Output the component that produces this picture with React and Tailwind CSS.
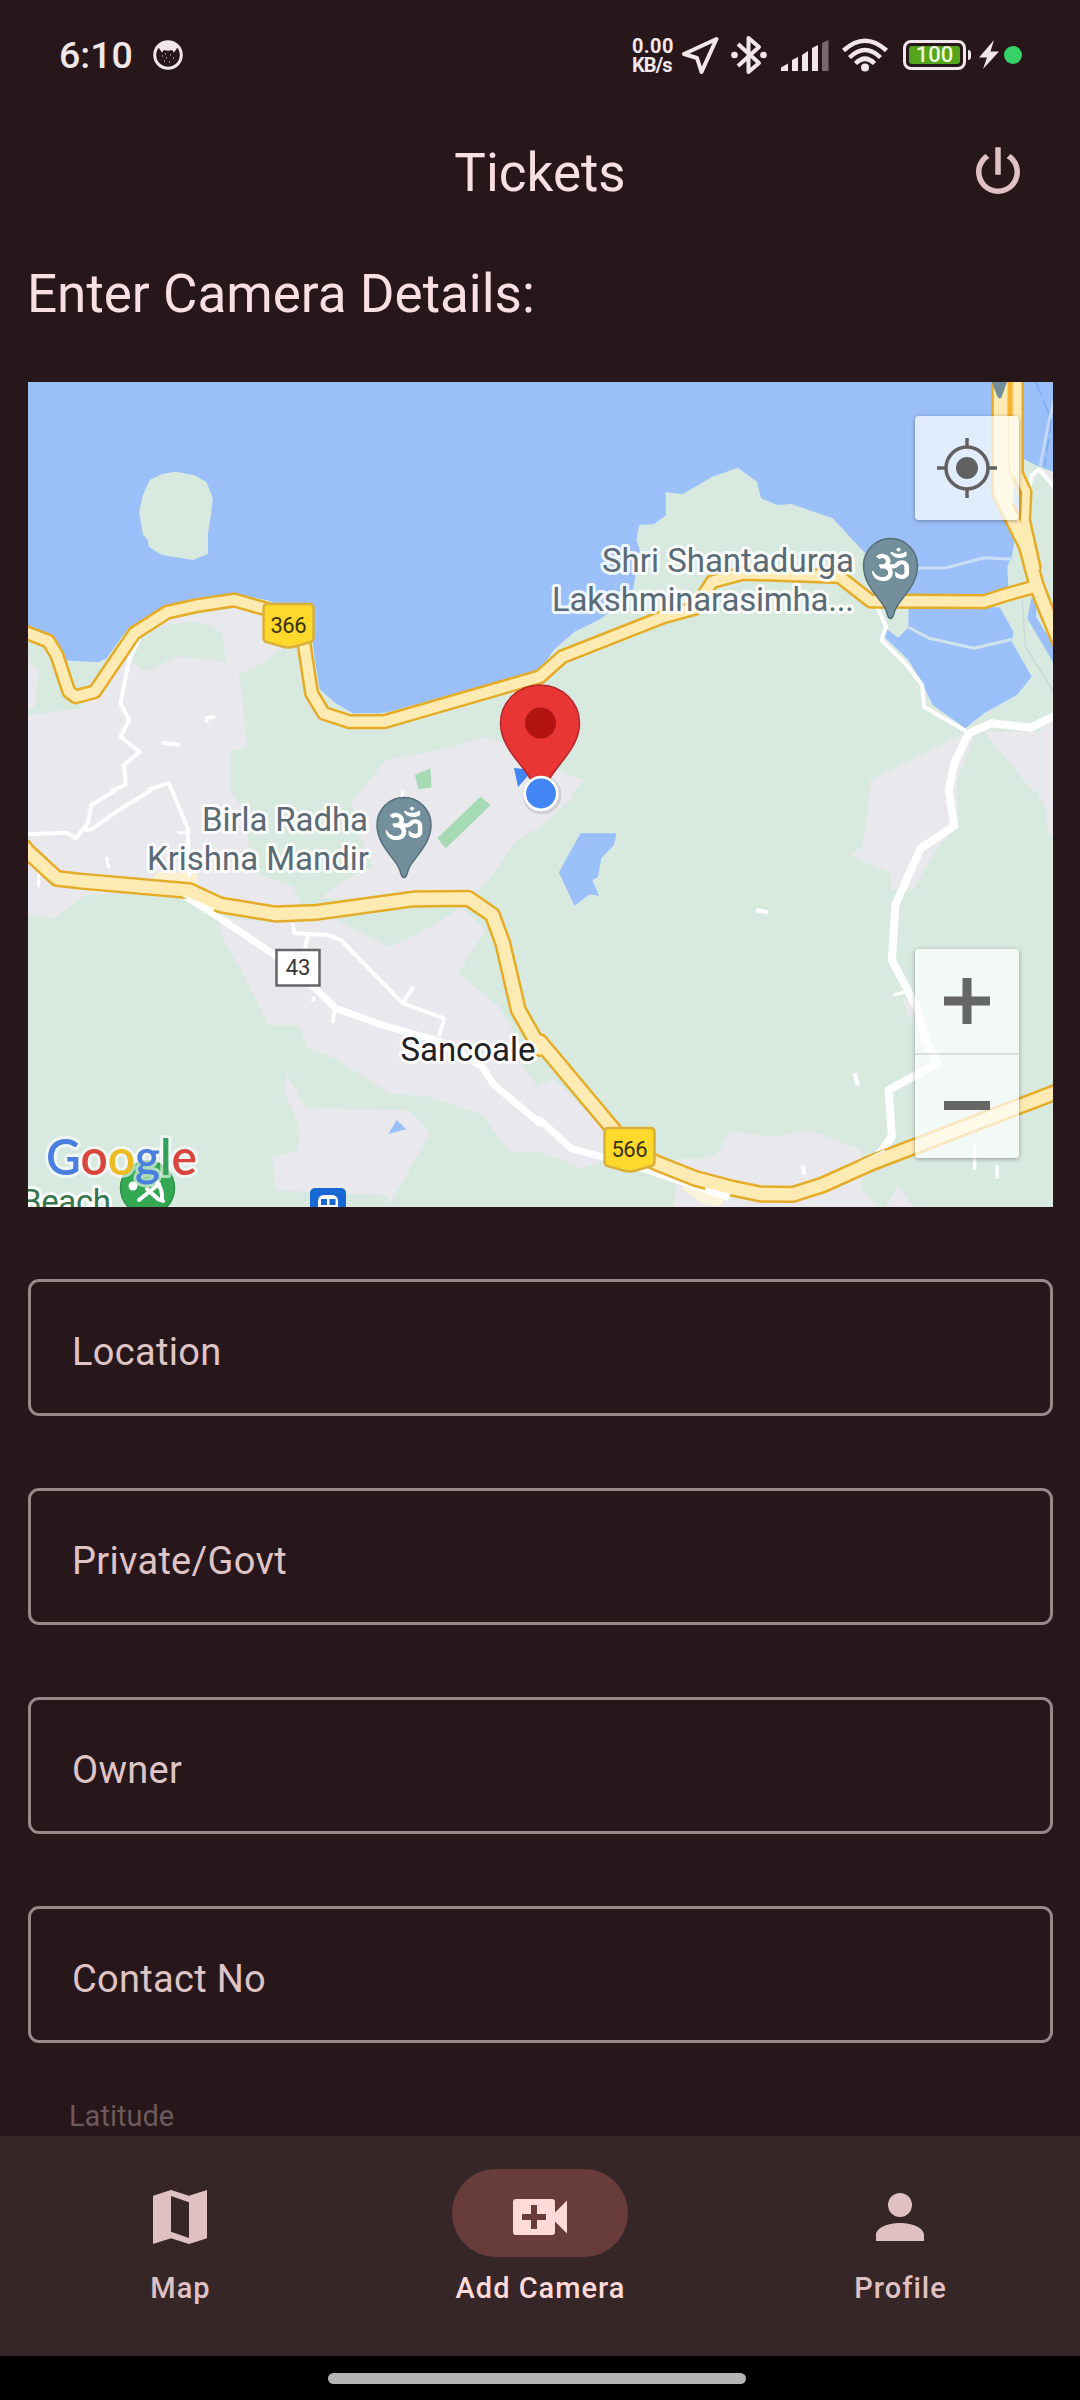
import React from "react";
import { FaOm } from "react-icons/fa";

const ROBOTO = "font-['Roboto',sans-serif]";

/* ---------- Map geometry: four tiles, each with its own local grid ---------- */
const TILES = { a: [0, 370], b: [540, 370], c: [0, 790], d: [540, 790] };

function trace(spec, close) {
  let tile = TILES.a;
  const pts = [];
  spec.split(" ").forEach((t) => {
    if (TILES[t]) {
      tile = TILES[t];
      return;
    }
    const [x, y] = t.split(",").map(Number);
    pts.push(`${(tile[0] + x / 2.904).toFixed(1)} ${(tile[1] + y / 3).toFixed(1)}`);
  });
  return "M" + pts.join("L") + (close ? "Z" : "");
}

const LAND =
  "a 75,790 150,815 180,870 205,872 285,877 310,865 340,820 375,772 490,708 680,672 775,690 900,740 912,850 928,958 975,1000 1025,1030 1100,1030 1130,1025 1568,900 b 0,900 40,840 100,785 180,745 270,660 290,540 280,510 288,465 330,463 365,437 365,367 415,372 500,320 575,293 630,335 642,385 690,405 730,402 850,445 940,545 1000,600 1050,676 1300,676 1360,650 1357,590 1370,560 1380,500 1395,450 1395,262 1445,288 1500,308 d 1500,1270 c 75,1270";

const URBAN = [
  "a 75,1037 230,1015 260,985 300,960 378,850 395,885 425,905 510,860 655,875 645,790 610,765 550,755 440,775 500,745 700,712 765,735 765,800 820,835 755,885 695,910 718,1130 670,1145 670,1260 c 680,20 715,70 720,150 740,250 850,290 880,350 760,370 550,300 250,315 155,385 75,370",
  "a 75,870 115,900 100,1010 75,1030",
  "a 1120,1170 1320,1130 1400,1100 1500,1130 1568,1165 b 0,1170 80,1215 130,1230 100,1260 d 90,30 0,110 c 1500,150 1420,270 1380,310 1100,330 930,325 1000,270 1080,230 1050,150 1020,40",
  "c 650,450 630,380 800,400 960,380 1130,470 1220,430 1340,350 1410,420 1330,550 1450,650 1500,740 1520,830 1568,900 d 0,885 40,865 190,1020 190,1110 120,1135 0,1085 c 1480,1085 1400,975 1250,920 1130,910 980,810 890,770 870,705 780,705 700,540",
  "c 830,850 890,955 1190,960 1250,1030 1130,1245 1120,1215 800,1200 790,1105 865,1080 870,1010 830,920",
  "d 515,1090 550,1025 680,1040 780,1020 935,1080 930,1120 935,1200 985,1260 385,1260 400,1170 330,1110 480,1105",
  "b 1240,1085 960,1230 d 960,0 935,170 900,195 1015,250 1020,300 1085,300 1150,180 1215,100 1210,0 b 1210,1230 1260,1110",
  "b 1290,1085 1450,1085 1500,1030 1500,1262 1430,1262",
  "d 1440,0 1500,0 1500,140 1475,130 1470,60",
  "d 1000,1260 1040,1185 1090,1260",
  "b 1415,330 1440,300 1500,308 1500,360 1450,310",
  "d 1050,620 1085,640 1085,710",
];

const LAGOONS = [
  "b 1070,712 1335,712 1375,785 1370,815 1428,920 1385,975 1290,1030 1235,1075 1140,1005 1110,940 1070,870 1000,800 1008,778 1040,803 1070,772",
  "b 1415,745 1428,680 1442,710 1440,740 1500,840 1500,895",
  "d 118,130 222,130 215,165 178,205 168,262 152,270 172,318 145,313 100,347 55,247",
  "c 1128,1032 1152,990 1180,1018",
];

const PARKS = [
  "a 1205,1215 1250,1195 1253,1252 1215,1258",
  "c 1395,20 1425,45 1295,175 1270,145",
];

const STREETS = [
  ["a 405,805 375,870 350,1000 375,1050 350,1100 405,1145 360,1185 365,1245 325,1262 c 330,5 265,45 255,100 220,145 195,128 75,133", 4],
  ["a 430,1258 490,1240 500,1262 c 545,115 550,260", 4],
  ["c 440,0 360,50 265,118 245,120", 4],
  ["a 600,1058 600,1045 625,1040", 4],
  ["a 470,1118 522,1124", 4],
  ["c 310,200 316,235", 3],
  ["c 112,245 112,292", 3],
  ["c 850,400 855,430 950,435 990,450 1170,640 1290,685 1275,740", 4],
  ["c 895,435 885,475", 4],
  ["c 1170,640 1200,590", 4],
  ["c 972,655 966,700", 4],
  ["c 515,128 540,128", 3],
  ["c 912,620 908,635", 4],
  ["c 1169,0 1169,24", 3],
  ["d 627,361 662,367", 4],
  ["d 915,850 923,886", 4],
  ["d 763,1125 768,1155", 4],
  ["d 1262,1065 1262,1140", 3.5],
  ["d 1327,1125 1327,1165", 3.5],
  ["d 1025,616 1060,606", 3],
  ["c 525,310 640,385 790,490 920,600 975,655 1110,705 1280,755 1400,830 1435,885 1568,1000 d 0,990 90,1075 190,1103 310,1140 440,1185 530,1215", 7],
  ["b 1500,1035 1425,1073 1310,1060 1245,1090 1203,1180 1187,1262 d 1187,0 1203,108 1105,175 1032,345 1022,510 1095,655 1120,750 1155,820 1012,900 1022,1040 980,1100 930,1125", 8],
  ["b 970,690 1005,770 992,810 1065,885 1110,945 1115,1010 1235,1082", 4],
  ["b 1422,350 1428,315 1450,298 1500,360", 4],
];

const HIGHWAYS = [
  ["a 70,784 81,790 140,813 165,855 200,965 220,980 275,965 390,790 485,727 570,707 680,690 800,725 880,800 905,970 940,1030 1015,1055 1115,1055 1568,920 b 0,920 65,860 360,740 450,715 500,635 590,610 870,620 960,693 1290,695 1350,675 1430,652", 14.5],
  ["c 65,165 81,185 165,265 230,273 550,302 640,345 800,372 920,367 1200,327 1360,325 1430,375 1460,460 1505,660 1568,775 d 0,755 210,1015 270,1085 340,1120 450,1165 560,1195 640,1212 735,1213 820,1185 960,1120 1500,906", 16.5],
  ["b 1335,20 1335,370 1412,530 1440,640 1458,690 1510,820", 16],
  ["b 1387,20 1387,310 1412,365 1408,450 1440,600", 12],
];

function Shield({ x, y, label }) {
  return (
    <g>
      <path
        d={`M${x - 21} ${y - 21}h42q4 0 4 4v30q0 3-3 4l-14 4q-8 3-16 0l-14-4q-3-1-3-4v-30q0-4 4-4z`}
        fill="#fdd92c"
        stroke="#d9b13a"
        strokeWidth="2.5"
      />
      <text x={x} y={y + 8} textAnchor="middle" fontSize="22" fill="#3b3212" textLength="36">
        {label}
      </text>
    </g>
  );
}

function TemplePin({ x, y }) {
  return (
    <g>
      <path
        d={`M${x} ${y + 53}c-2.500 0-3-3-4-7c-3-11-23-24-23-46a27 27 0 0 1 54 0c0 22-20 35-23 46c-1 4-1.500 7-4 7z`}
        fill="#728f9b"
        stroke="#546e7a"
        strokeWidth="1.500"
      />
      <g transform={`translate(${x - 18.500} ${y - 18}) scale(1 0.910)`}>
        <FaOm size={37} color="#fff" />
      </g>
    </g>
  );
}

function PlaceLabel({ x, y, width, anchor = "end", color = "#5b6b76", children }) {
  return (
    <text
      x={x}
      y={y}
      textAnchor={anchor}
      textLength={width}
      fontSize="33"
      fill={color}
      stroke="#fff"
      strokeOpacity="0.850"
      strokeWidth="6"
      strokeLinejoin="round"
      paintOrder="stroke"
    >
      {children}
    </text>
  );
}

function MapDrawing() {
  return (
    <svg viewBox="28 382 1025 825" className={`block h-full w-full ${ROBOTO}`}>
      <rect x="28" y="382" width="1025" height="825" fill="#9bc0f9" />
      <path d={trace(LAND, true)} fill="#d8e9e0" />
      <path
        d={trace("a 435,330 470,312 510,305 565,316 600,337 618,385 612,440 604,490 604,552 560,570 470,555 432,530 430,512 415,493 404,425 415,375", true)}
        fill="#d8e9e0"
      />
      {URBAN.map((s) => (
        <path key={s} d={trace(s, true)} fill="#e8e8ed" />
      ))}
      {LAGOONS.map((s) => (
        <path key={s} d={trace(s, true)} fill="#9bc0f9" />
      ))}
      {PARKS.map((s) => (
        <path key={s} d={trace(s, true)} fill="#a6dab5" />
      ))}
      <path d={trace("c 445,262 460,245 575,250 572,290 545,300 450,275", true)} fill="#fbf0cf" />
      <path d={trace("d 410,1195 440,1180 540,1225 520,1250 470,1240", true)} fill="#fbf3dc" />
      <g fill="none" strokeLinejoin="round">
        <path d={trace("b 1070,772 1130,805 1260,835 1372,808")} stroke="#cfe3ee" strokeWidth="3" />
        <path d={trace("b 1095,595 1180,593 1290,563 1375,568")} stroke="#c8def4" strokeWidth="3" />
        <path d={trace("b 1500,60 1475,170 1452,290")} stroke="#c2d8f6" strokeWidth="3" />
        <path d={trace("b 1440,36 1485,150 1465,290")} stroke="#7fa9ee" strokeWidth="1.500" strokeDasharray="14 6" />
        <path d={trace("b 1400,690 1410,830 1500,980")} stroke="#c9d8d6" strokeWidth="1.500" />
        {STREETS.map(([s, w]) => (
          <path key={s} d={trace(s)} stroke="#fff" strokeWidth={w} strokeLinecap="butt" />
        ))}
        {HIGHWAYS.map(([s, w]) => (
          <path key={s} d={trace(s)} stroke="#e5ac28" strokeWidth={w + 0.8} />
        ))}
        <path d={trace("c 535,310 620,362")} stroke="#fff" strokeWidth="7" />
        <path d={trace("d 480,1195 550,1222")} stroke="#fff" strokeWidth="8" />
        <path d={trace("d 1005,1088 930,1125")} stroke="#fff" strokeWidth="7" />
        <path d={trace("b 1362,20 1362,400")} stroke="#feebb3" strokeWidth="9" />
        <path d={trace("b 1362,140 1362,300 1390,380")} stroke="#eec25a" strokeWidth="1.500" />
        <path d={trace("b 1365,20 1365,140")} stroke="#f5b42b" strokeWidth="5" />
        {HIGHWAYS.map(([s, w]) => (
          <path key={s} d={trace(s)} stroke="#feebb3" strokeWidth={w - 4.2} />
        ))}
      </g>
      <path d="M992 382h15l-5 14q-2 5-5 0z" fill="#728f9b" />

      <Shield x={288.500} y={625} label="366" />
      <Shield x={629.500} y={1149} label="566" />
      <rect x="276.500" y="950" width="43" height="35.500" fill="#fff" stroke="#666" strokeWidth="2.500" />
      <text x="298" y="975" textAnchor="middle" fontSize="22" fill="#333">
        43
      </text>

      <PlaceLabel x={854} y={572} width={252}>Shri Shantadurga</PlaceLabel>
      <PlaceLabel x={854} y={611} width={302}>Lakshminarasimha...</PlaceLabel>
      <PlaceLabel x={368} y={831} width={166}>Birla Radha</PlaceLabel>
      <PlaceLabel x={369} y={870} width={222}>Krishna Mandir</PlaceLabel>
      <PlaceLabel x={535.500} y={1061} width={135} color="#202124">Sancoale</PlaceLabel>
      <PlaceLabel x={111} y={1213} width={90} color="#34754f">Beach</PlaceLabel>
      <TemplePin x={890.500} y={565.500} />
      <TemplePin x={404} y={824.500} />

      <circle cx="147.500" cy="1188" r="27" fill="#34a853" stroke="#2a8f47" strokeWidth="1.500" />
      <g stroke="#fff" strokeWidth="4" fill="none" strokeLinecap="round">
        <path d="M139 1200l20-16M147 1189l11 10l5 2M157 1182q6 8 5 18" />
      </g>
      <circle cx="133" cy="1186" r="4.500" fill="#fff" />

      <rect x="310" y="1188" width="36" height="30" rx="5" fill="#1967d2" />
      <path d="M318 1210v-8q0-7 6-7h8q6 0 6 7v8z" fill="#fff" />
      <path d="M321 1199h6v6h-6zM329.500 1199h6v6h-6z" fill="#1967d2" />

      <path d="M514 768L533 770L518 787Z" fill="#4285f4" />
      <path
        d="M540 797c-4 0-5-9-9-17c-8-16-30.500-32-30.500-57a39.500 38 0 0 1 79 0c0 25-22.500 41-30.500 57c-4 8-5 17-9 17z"
        fill="#ea3535"
        stroke="#b3262a"
        strokeWidth="1.500"
      />
      <circle cx="540.500" cy="723" r="15.500" fill="#b31412" />
      <circle cx="542" cy="795" r="19.500" fill="#000" opacity="0.100" />
      <circle cx="541" cy="793.500" r="16.300" fill="#4285f4" stroke="#fff" strokeWidth="2.800" />

      <text
        x="46"
        y="1175"
        fontFamily="Lato, sans-serif"
        fontWeight="600"
        fontSize="49"
        textLength="151"
        lengthAdjust="spacingAndGlyphs"
        stroke="#fff"
        strokeOpacity="0.600"
        strokeWidth="6"
        strokeLinejoin="round"
        paintOrder="stroke"
      >
        <tspan fill="#4a7fe0">G</tspan>
        <tspan fill="#d9453c">o</tspan>
        <tspan fill="#eebb1f">o</tspan>
        <tspan fill="#4a7fe0">g</tspan>
        <tspan fill="#34a05a">l</tspan>
        <tspan fill="#d9453c">e</tspan>
      </text>
    </svg>
  );
}

function MapView() {
  return (
    <section className="relative h-[825px] w-full overflow-hidden">
      <MapDrawing />
      <button className="absolute right-[34px] top-[34px] flex h-[104px] w-[104px] items-center justify-center rounded-[4px] bg-white/70 shadow-[0_1px_4px_rgba(0,0,0,0.35)]">
        <svg viewBox="0 0 60 60" className="h-[60px] w-[60px]" fill="none" stroke="#616161">
          <circle cx="30" cy="30" r="21" strokeWidth="3.5" />
          <circle cx="30" cy="30" r="11" fill="#616161" stroke="none" />
          <path d="M30 0v9M30 51v9M0 30h9M51 30h9" strokeWidth="3.5" />
        </svg>
      </button>
      <div className="absolute right-[34px] top-[567px] flex h-[209px] w-[104px] flex-col divide-y-2 divide-black/10 rounded-[4px] bg-white/70 shadow-[0_1px_4px_rgba(0,0,0,0.35)]">
        <button className="flex flex-1 items-center justify-center">
          <svg viewBox="0 0 46 46" className="size-[46px]">
            <path d="M0 18.500H18.500V0h9V18.500H46v9H27.500V46h-9V27.500H0z" fill="#666" />
          </svg>
        </button>
        <button className="flex flex-1 items-center justify-center">
          <span className="-mt-[2px] h-[9px] w-[46px] bg-[#666]" />
        </button>
      </div>
    </section>
  );
}

/* ---------- Status bar ---------- */
function StatusBar() {
  return (
    <div className="flex h-[110px] items-center justify-between pl-[59px] pr-[58px] text-[#f1e7e9]">
      <div className="flex items-center gap-[20px]">
        <span className="pt-[2px] text-[37.5px] font-medium leading-none">6:10</span>
        <svg viewBox="0 0 30 30" className="size-[30px]">
          <circle cx="15" cy="15" r="13.300" fill="none" stroke="currentColor" strokeWidth="3" />
          <path d="M5 6Q15-2 25 6L23.500 9L21 12.500L19 10Q15 11.500 11 10L9 12.500L6.500 9Z" fill="currentColor" />
          <path d="M9 16h1M13 18h1M17 15h1M20 18h1M11 21h1M16 22h1M12 14h1" stroke="currentColor" strokeWidth="1" />
        </svg>
      </div>
      <div className="flex items-center">
        <div className="flex w-[43px] flex-col whitespace-nowrap pt-[2px] text-[20px] font-bold leading-[19px]">
          <span className="tracking-[0.4px]">0.00</span>
          <span className="tracking-[-0.9px]">KB/s</span>
        </div>
        <svg viewBox="0 0 38 38" className="ml-[6px] size-[38px]">
          <path d="M35.500 3L3 18L16 22L20.500 36Z" fill="none" stroke="currentColor" strokeWidth="4" strokeLinejoin="round" />
        </svg>
        <svg viewBox="0 0 36 40" className="ml-[12px] h-[40px] w-[36px]">
          <path d="M7 9L28 28L17.500 37V3L28 12L7 31" fill="none" stroke="currentColor" strokeWidth="4" strokeLinejoin="round" />
          <circle cx="3.500" cy="20" r="3.300" fill="currentColor" />
          <circle cx="32.500" cy="20" r="3.300" fill="currentColor" />
        </svg>
        <svg viewBox="0 0 48 32" className="ml-[14px] h-[32px] w-[48px]">
          <g fill="currentColor">
            <path d="M0 32V28.500L7 24.500V32zM11 32V21L17 18V32zM21 32V16L27 12V32zM31 32V9L37 6V32z" />
            <path d="M41 32V4L47.500 1V32z" opacity="0.400" />
          </g>
        </svg>
        <svg viewBox="0 0 46 34" className="ml-[13px] h-[34px] w-[46px]">
          <g fill="none" stroke="currentColor" strokeWidth="4.500">
            <path d="M1.500 12.500Q23-7 44.500 12.500" />
            <path d="M7.500 19.500Q23 4.500 38.500 19.500" />
            <path d="M13.500 25.500Q23 16 32.500 25.500" />
          </g>
          <circle cx="23" cy="29.500" r="4" fill="currentColor" />
        </svg>
        <div className="ml-[15px] flex h-[30px] w-[63px] items-center justify-center rounded-[8px] border-[3px] border-current p-[3px]">
          <span className="flex h-full w-full items-center justify-center rounded-[3px] bg-[#54a51c] text-[22px] font-medium leading-none text-[#eef7dc]">
            100
          </span>
        </div>
        <span className="ml-[2px] h-[10px] w-[3px] rounded-r bg-current" />
        <svg viewBox="0 0 20 30" className="ml-[8px] h-[30px] w-[20px]">
          <path d="M15 0L0 17.500H8L4 29L20 11.500H11.500z" fill="currentColor" />
        </svg>
        <span className="ml-[5px] size-[18px] rounded-full bg-[#36d265]" />
      </div>
    </div>
  );
}

function Header() {
  return (
    <header className="grid h-[124px] grid-cols-[1fr_auto_1fr] items-center px-[49px] text-[#f8dfe1]">
      <span />
      <h1 className="pt-[2px] text-[53px] leading-none">Tickets</h1>
      <button className="justify-self-end">
        <svg viewBox="0 0 24 24" className="size-[66px]" fill="#dfc1c4">
          <path d="M16.560 5.440L15.110 6.890C16.840 7.940 18 9.830 18 12A6 6 0 0 1 12 18A6 6 0 0 1 6 12C6 9.830 7.160 7.940 8.880 6.880L7.440 5.440C5.360 6.880 4 9.280 4 12A8 8 0 0 0 12 20A8 8 0 0 0 20 12C20 9.280 18.640 6.880 16.560 5.440M13 3H11V13H13" />
        </svg>
      </button>
    </header>
  );
}

function Field({ label }) {
  return (
    <label className="flex h-[137px] items-center rounded-[11px] border-[3px] border-[#9b8788] pl-[41px] pt-[9px] text-[38px] tracking-[0.3px] text-[#dfc4c6]">
      {label}
    </label>
  );
}

/* ---------- Bottom navigation ---------- */
const NAV = [
  { label: "Map", d: "M3 4.900L9 3L15 4.900L21 3V19.100L15 21L9 19.100L3 21ZM9 5V16.900L15 19V7.100Z" },
  {
    label: "Add Camera",
    active: true,
    d: "M17 10.500V7A1 1 0 0 0 16 6H4A1 1 0 0 0 3 7V17A1 1 0 0 0 4 18H16A1 1 0 0 0 17 17V13.500L21 17.500V6.500L17 10.500M14 13H11V16H9V13H6V11H9V8H11V11H14V13Z",
  },
  {
    label: "Profile",
    d: "M12 4A4 4 0 0 1 16 8A4 4 0 0 1 12 12A4 4 0 0 1 8 8A4 4 0 0 1 12 4M12 14C16.420 14 20 15.790 20 18V20H4V18C4 15.790 7.580 14 12 14Z",
  },
];

function BottomNav() {
  return (
    <nav className="grid h-[220px] shrink-0 grid-cols-3 bg-[#372627] pt-[33px]">
      {NAV.map(({ label, d, active }) => (
        <button
          key={label}
          className={`flex flex-col items-center ${active ? "text-[#ffdad8]" : "text-[#dfc1c4]"}`}
        >
          <span className={`flex h-[88px] w-[176px] justify-center rounded-full pt-[12px] ${active ? "bg-[#683c3a]" : ""}`}>
            <svg viewBox="0 0 24 24" className="size-[72px]" fill="currentColor" fillRule="evenodd">
              <path d={d} />
            </svg>
          </span>
          <span className="mt-[13px] pl-[1px] text-[29px] font-medium leading-[36px] tracking-[1px]">{label}</span>
        </button>
      ))}
    </nav>
  );
}

export default function App() {
  return (
    <div className={`flex h-[2400px] w-[1080px] flex-col overflow-hidden bg-[#27171b] ${ROBOTO}`}>
      <StatusBar />
      <Header />
      <main className="flex min-h-0 flex-1 flex-col overflow-hidden pl-[28px] pr-[27px]">
        <h2 className="-ml-[1px] flex h-[148px] items-start pt-[29px] text-[53px] leading-[62px] text-[#f8dfe1]">
          Enter Camera Details:
        </h2>
        <MapView />
        <div className="mt-[72px] flex flex-col gap-[72px]">
          <Field label="Location" />
          <Field label="Private/Govt" />
          <Field label="Owner" />
          <Field label="Contact No" />
        </div>
        <span className="mt-[55px] pl-[41px] text-[29px] leading-[36px] text-[#6d5a5e]">Latitude</span>
      </main>
      <BottomNav />
      <footer className="flex h-[44px] shrink-0 justify-center bg-black pt-[17px]">
        <span className="ml-[-6px] h-[11px] w-[418px] rounded-full bg-[#b5b5b5]" />
      </footer>
    </div>
  );
}
